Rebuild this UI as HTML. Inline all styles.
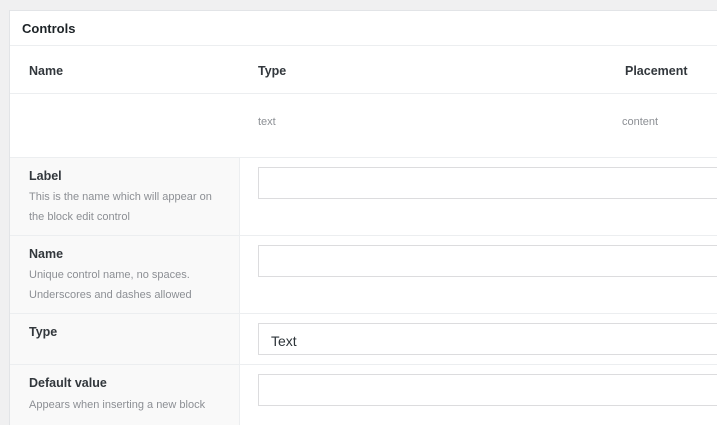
<!DOCTYPE html>
<html><head><style>
html,body{margin:0;width:717px;height:425px;overflow:hidden}
body{background:#f0f0f1;font-family:"Liberation Sans",sans-serif;position:relative}
.p{position:absolute;left:9px;top:10px;width:720px;height:420px;background:#fff;border:1px solid #e2e4e7;border-bottom:none}
.a{position:absolute;white-space:nowrap}
.h{font-size:12.5px;color:#32373c;font-weight:bold}
.s{font-size:11px;color:#8c8f94;line-height:20px}
.l{position:absolute;left:0;width:720px;height:1px;background:#eceef0}
.lc{position:absolute;left:0;width:229px;background:#f9f9f9;border-right:1px solid #eceef0}
.in{position:absolute;left:248px;width:480px;height:30px;border:1px solid #dcdcde;background:#fff}
</style></head><body>
<div class="p">
<div class="a h" style="left:12px;top:10px;font-size:13px;color:#1d2327">Controls</div>
<div class="l" style="top:34px"></div>
<div class="a h" style="left:19px;top:53px">Name</div>
<div class="a h" style="left:248px;top:53px">Type</div>
<div class="a h" style="left:615px;top:53px">Placement</div>
<div class="l" style="top:82px"></div>
<div class="a s" style="left:248px;top:101px">text</div>
<div class="a s" style="left:612px;top:101px">content</div>
<div class="l" style="top:146px"></div>
<div class="lc" style="top:147px;height:77px"></div>
<div class="l" style="top:224px"></div>
<div class="lc" style="top:225px;height:77px"></div>
<div class="l" style="top:302px"></div>
<div class="lc" style="top:303px;height:50px"></div>
<div class="l" style="top:353px"></div>
<div class="lc" style="top:354px;height:80px"></div>
<div class="a h" style="left:19px;top:158px">Label</div>
<div class="a s" style="left:19px;top:176px">This is the name which will appear on<br>the block edit control</div>
<div class="in" style="top:156px"></div>
<div class="a h" style="left:19px;top:236px">Name</div>
<div class="a s" style="left:19px;top:254px">Unique control name, no spaces.<br>Underscores and dashes allowed</div>
<div class="in" style="top:234px"></div>
<div class="a h" style="left:19px;top:314px">Type</div>
<div class="in" style="top:312px"></div>
<div class="a" style="left:261px;top:322px;font-size:14px;color:#2c3338">Text</div>
<div class="a h" style="left:19px;top:365px">Default value</div>
<div class="a s" style="left:19px;top:384px">Appears when inserting a new block</div>
<div class="in" style="top:363px"></div>
</div>
</body></html>
